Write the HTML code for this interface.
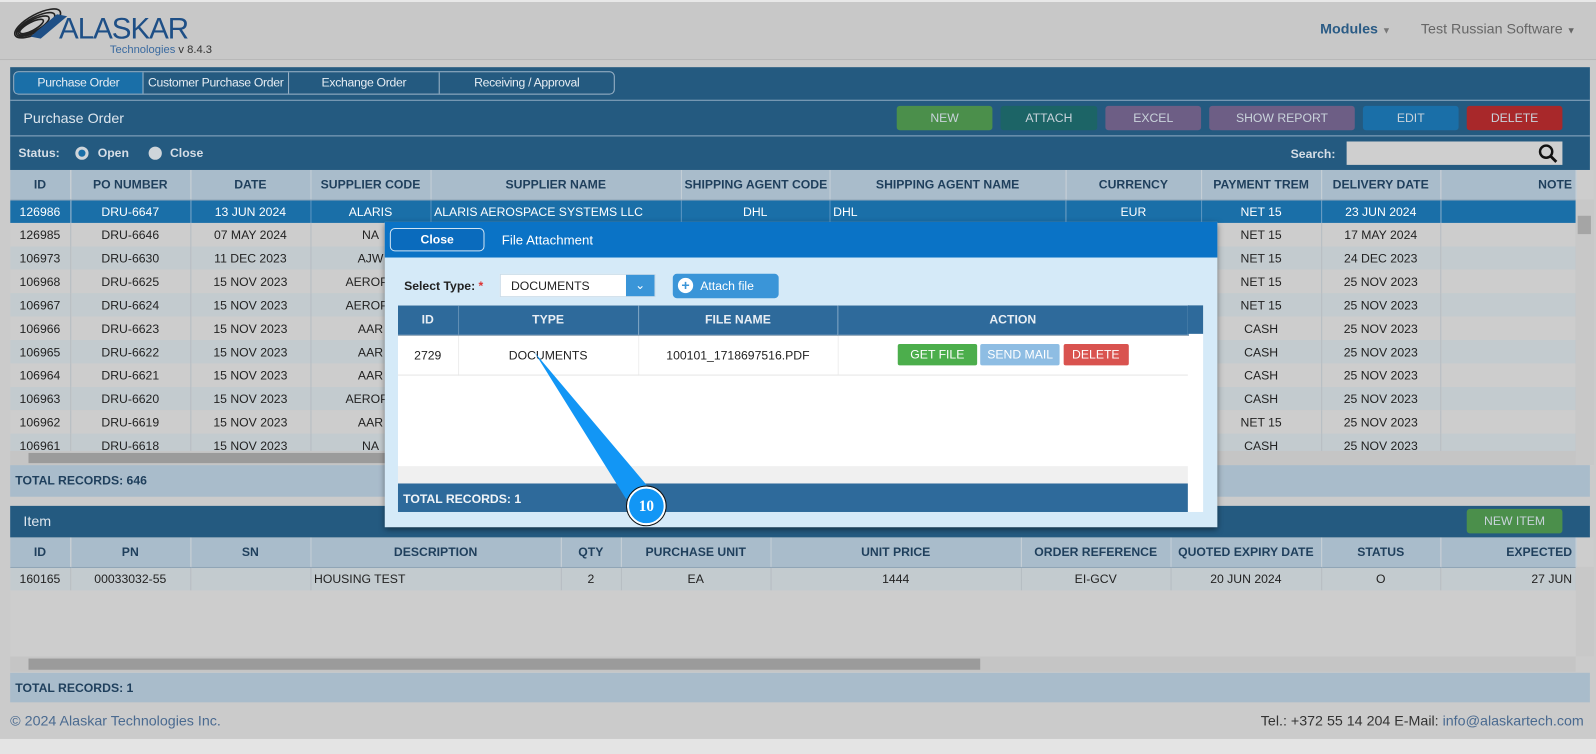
<!DOCTYPE html>
<html><head><meta charset="utf-8"><style>
*{box-sizing:border-box;margin:0;padding:0}
html,body{width:1596px;height:741px;overflow:hidden}
body{background:#cbcbcb;font-family:"Liberation Sans",Arial,sans-serif;font-size:12px;color:#222}
#w{position:absolute;left:0;top:0;width:1568px;height:728px;transform:scale(1.01786);transform-origin:0 0}
.a{position:absolute}
table{border-collapse:collapse;table-layout:fixed}
td,th{white-space:nowrap;overflow:hidden;text-align:center;border-right:1px solid #b5bcc2;padding:0 3px}
th{background:#a9bccb;color:#1f3f5c;font-weight:bold;font-size:12px;height:29px;border-right:1px solid #c3ced7;border-bottom:1px solid #8ea4b6}
.tb td{height:23px}
.tb tr:nth-child(odd) td{background:#cdcdcd}
.tb tr:nth-child(even) td{background:#c3cbcf}
.tb tr.sel td{background:#1a6fa8;color:#fff;border-right-color:#4f8fbf}
.btn{position:absolute;top:104px;height:24px;border-radius:3px;color:#c9d3db;text-align:center;line-height:24px;font-size:12px}
.bar{background:#245a80}
</style></head><body><div id="w">
<div class="a" style="left:0;top:0;width:1568px;height:2px;background:#e8e8e8"></div>
<div class="a" style="left:0;top:2px;width:1568px;height:57px;background:#c8c8c8;border-bottom:1px solid #b8b8b8"></div>
<svg class="a" style="left:10px;top:6px" width="62" height="36" viewBox="0 0 62 36">
<g fill="none" stroke="#222" stroke-width="1.6"><ellipse cx="27" cy="17" rx="25" ry="9" transform="rotate(-28 27 17)"/><ellipse cx="25" cy="18" rx="21" ry="7" transform="rotate(-28 25 18)"/><ellipse cx="23" cy="19" rx="17" ry="5.5" transform="rotate(-28 23 19)"/><ellipse cx="21" cy="20" rx="13" ry="4" transform="rotate(-28 21 20)"/></g>
<path d="M20 30 L46 8 L56 10 L30 32Z" fill="#1e4f86"/></svg>
<div class="a" style="left:58px;top:13px;font-size:29px;color:#1e4f86;letter-spacing:-1px">ALASKAR</div>
<div class="a" style="left:108px;top:43px;font-size:11px;color:#3a6aa0">Technologies <span style="color:#333">v 8.4.3</span></div>
<div class="a" style="left:1297px;top:20px;font-size:14px;font-weight:bold;color:#2a5b85">Modules <span style="font-size:9px;color:#777">▼</span></div>
<div class="a" style="left:1396px;top:20px;font-size:14px;color:#666">Test Russian Software <span style="font-size:9px">▼</span></div>

<div class="a bar" style="left:10px;top:66px;width:1552px;height:101px"></div>
<div class="a" style="left:13px;top:70px;width:591px;height:23px;border:1px solid #9fb6c9;border-radius:5px;overflow:hidden;display:flex;color:#e6edf3;font-size:12px;letter-spacing:-0.3px">
<div style="width:126px;background:#1a6fa8;text-align:center;line-height:21px">Purchase Order</div>
<div style="width:143px;border-left:1px solid #9fb6c9;text-align:center;line-height:21px;white-space:nowrap">Customer Purchase Order</div>
<div style="width:148px;border-left:1px solid #9fb6c9;text-align:center;line-height:21px">Exchange Order</div>
<div style="flex:1;border-left:1px solid #9fb6c9;text-align:center;line-height:21px">Receiving / Approval</div></div>
<div class="a" style="left:10px;top:98px;width:1552px;height:1px;background:#8eaac2"></div>
<div class="a" style="left:23px;top:108px;font-size:14px;color:#dde6ee">Purchase Order</div>
<div class="btn" style="left:881px;width:94px;background:#4b8f4b">NEW</div>
<div class="btn" style="left:983px;width:95px;background:#1c6466">ATTACH</div>
<div class="btn" style="left:1086px;width:94px;background:#6d5e85">EXCEL</div>
<div class="btn" style="left:1188px;width:143px;background:#6d5e85">SHOW REPORT</div>
<div class="btn" style="left:1339px;width:94px;background:#1a6fa8">EDIT</div>
<div class="btn" style="left:1441px;width:94px;background:#a8282a">DELETE</div>
<div class="a" style="left:10px;top:133px;width:1552px;height:1px;background:#8eaac2"></div>
<div class="a" style="left:18px;top:143px;font-weight:bold;color:#d6dee6">Status:</div>
<div class="a" style="left:74px;top:144px;width:13px;height:13px;border-radius:50%;background:#cfd5da;border:3px solid #cfd5da"><div style="width:7px;height:7px;border-radius:50%;background:#1a6fa8;margin:0"></div></div>
<div class="a" style="left:96px;top:143px;font-weight:bold;color:#d6dee6">Open</div>
<div class="a" style="left:146px;top:144px;width:13px;height:13px;border-radius:50%;background:#cfd5da"></div>
<div class="a" style="left:167px;top:143px;font-weight:bold;color:#d6dee6">Close</div>
<div class="a" style="left:1268px;top:144px;font-weight:bold;color:#d6dee6">Search:</div>
<div class="a" style="left:1323px;top:139px;width:212px;height:23px;background:#cfcfcf"></div>
<svg class="a" style="left:1511px;top:141px" width="20" height="20" viewBox="0 0 20 20"><circle cx="8" cy="8" r="6" fill="none" stroke="#111" stroke-width="2.4"/><path d="M12.5 12.5 L18 18" stroke="#111" stroke-width="2.8"/></svg>

<div class="a" style="left:10px;top:167px;width:1556px;height:290px;background:#cdcdcd;overflow:hidden">
<table class="tb" style="width:1538px">
<colgroup><col style="width:59px"><col style="width:118px"><col style="width:118px"><col style="width:118px"><col style="width:246px"><col style="width:146px"><col style="width:232px"><col style="width:133px"><col style="width:118px"><col style="width:117px"><col style="width:133px"></colgroup>
<tr><th>ID</th><th>PO NUMBER</th><th>DATE</th><th>SUPPLIER CODE</th><th>SUPPLIER NAME</th><th>SHIPPING AGENT CODE</th><th>SHIPPING AGENT NAME</th><th>CURRENCY</th><th>PAYMENT TREM</th><th>DELIVERY DATE</th><th style="text-align:right">NOTE</th></tr>
<tr class="sel"><td>126986</td><td>DRU-6647</td><td>13 JUN 2024</td><td>ALARIS</td><td style="text-align:left">ALARIS AEROSPACE SYSTEMS LLC</td><td>DHL</td><td style="text-align:left">DHL</td><td>EUR</td><td>NET 15</td><td>23 JUN 2024</td><td></td></tr>
<tr><td>126985</td><td>DRU-6646</td><td>07 MAY 2024</td><td>NA</td><td></td><td></td><td></td><td></td><td>NET 15</td><td>17 MAY 2024</td><td></td></tr>
<tr><td>106973</td><td>DRU-6630</td><td>11 DEC 2023</td><td>AJW</td><td></td><td></td><td></td><td></td><td>NET 15</td><td>24 DEC 2023</td><td></td></tr>
<tr><td>106968</td><td>DRU-6625</td><td>15 NOV 2023</td><td>AEROPA</td><td></td><td></td><td></td><td></td><td>NET 15</td><td>25 NOV 2023</td><td></td></tr>
<tr><td>106967</td><td>DRU-6624</td><td>15 NOV 2023</td><td>AEROPA</td><td></td><td></td><td></td><td></td><td>NET 15</td><td>25 NOV 2023</td><td></td></tr>
<tr><td>106966</td><td>DRU-6623</td><td>15 NOV 2023</td><td>AAR</td><td></td><td></td><td></td><td></td><td>CASH</td><td>25 NOV 2023</td><td></td></tr>
<tr><td>106965</td><td>DRU-6622</td><td>15 NOV 2023</td><td>AAR</td><td></td><td></td><td></td><td></td><td>CASH</td><td>25 NOV 2023</td><td></td></tr>
<tr><td>106964</td><td>DRU-6621</td><td>15 NOV 2023</td><td>AAR</td><td></td><td></td><td></td><td></td><td>CASH</td><td>25 NOV 2023</td><td></td></tr>
<tr><td>106963</td><td>DRU-6620</td><td>15 NOV 2023</td><td>AEROPA</td><td></td><td></td><td></td><td></td><td>CASH</td><td>25 NOV 2023</td><td></td></tr>
<tr><td>106962</td><td>DRU-6619</td><td>15 NOV 2023</td><td>AAR</td><td></td><td></td><td></td><td></td><td>NET 15</td><td>25 NOV 2023</td><td></td></tr>
<tr><td>106961</td><td>DRU-6618</td><td>15 NOV 2023</td><td>NA</td><td></td><td></td><td></td><td></td><td>CASH</td><td>25 NOV 2023</td><td></td></tr>
</table>
<div class="a" style="left:1538px;top:29px;width:18px;height:261px;background:#c8c8c8"><div style="margin:16px 2px;width:13px;height:18px;background:#a5a5a5"></div></div>
</div>
<div class="a" style="left:10px;top:443px;width:1538px;height:14px;background:#c5c5c5"><div style="margin:2px 0 0 18px;width:1000px;height:10px;background:#9b9b9b"></div></div>
<div class="a" style="left:10px;top:457px;width:1552px;height:31px;background:#a9bccb;font-weight:bold;color:#1f3f5c;padding:8px 5px">TOTAL RECORDS: 646</div>

<div class="a bar" style="left:10px;top:497px;width:1552px;height:31px"></div>
<div class="a" style="left:23px;top:504px;font-size:14px;color:#dde6ee">Item</div>
<div class="a" style="left:1441px;top:500px;width:94px;height:24px;border-radius:3px;background:#4b8f4b;color:#c9d3db;text-align:center;line-height:24px">NEW ITEM</div>
<div class="a" style="left:10px;top:528px;width:1556px;height:117px;background:#cdcdcd;overflow:hidden">
<table class="tb" style="width:1538px">
<colgroup><col style="width:59px"><col style="width:118px"><col style="width:118px"><col style="width:246px"><col style="width:59px"><col style="width:147px"><col style="width:246px"><col style="width:147px"><col style="width:148px"><col style="width:117px"><col style="width:133px"></colgroup>
<tr><th>ID</th><th>PN</th><th>SN</th><th>DESCRIPTION</th><th>QTY</th><th>PURCHASE UNIT</th><th>UNIT PRICE</th><th>ORDER REFERENCE</th><th>QUOTED EXPIRY DATE</th><th>STATUS</th><th style="text-align:right">EXPECTED</th></tr>
<tr><td>160165</td><td>00033032-55</td><td></td><td style="text-align:left">HOUSING TEST</td><td>2</td><td>EA</td><td>1444</td><td>EI-GCV</td><td>20 JUN 2024</td><td>O</td><td style="text-align:right">27 JUN</td></tr>
</table>
<div class="a" style="left:1538px;top:29px;width:18px;height:88px;background:#c8c8c8"></div>
</div>
<div class="a" style="left:10px;top:645px;width:1538px;height:15px;background:#c5c5c5"><div style="margin:2px 0 0 18px;width:935px;height:11px;background:#9b9b9b"></div></div>
<div class="a" style="left:10px;top:661px;width:1552px;height:29px;background:#a9bccb;font-weight:bold;color:#1f3f5c;padding:8px 5px">TOTAL RECORDS: 1</div>

<div class="a" style="left:10px;top:700px;font-size:14px;color:#4a6a90">© 2024 Alaskar Technologies Inc.</div>
<div class="a" style="right:12px;top:700px;font-size:14px;color:#333">Tel.: +372 55 14 204 E-Mail: <span style="color:#4a6a90">info@alaskartech.com</span></div>
<div class="a" style="left:0;top:726px;width:1568px;height:15px;background:#e4e4e4"></div>

<div class="a" style="left:378px;top:218px;width:818px;height:300px;background:#d5eaf8;box-shadow:0 2px 6px rgba(0,0,0,.5)">
<div style="height:35px;background:#0a73c6;position:relative">
<div class="a" style="left:5px;top:6px;width:93px;height:23px;border:1px solid #cfe4f4;border-radius:5px;background:#0a6bbd;color:#fff;text-align:center;line-height:20px;font-weight:bold">Close</div>
<div class="a" style="left:115px;top:10px;font-size:13px;color:#fff">File Attachment</div></div>
<div class="a" style="left:19px;top:56px;font-weight:bold;color:#222">Select Type: <span style="color:#d33">*</span></div>
<div class="a" style="left:113px;top:51px;width:153px;height:23px;background:#fff;border:1px solid #c9dbe8"><span style="position:absolute;left:10px;top:4px">DOCUMENTS</span><div style="position:absolute;right:0;top:0;width:28px;height:21px;background:#3a95d8;color:#fff;text-align:center;line-height:20px">⌄</div></div>
<div class="a" style="left:283px;top:51px;width:104px;height:24px;background:#3a95d8;border-radius:4px;color:#fff"><span style="position:absolute;left:5px;top:4px;width:15px;height:15px;border-radius:50%;background:#fff;color:#3a95d8;font-weight:bold;text-align:center;line-height:15px;font-size:14px">+</span><span style="position:absolute;left:27px;top:5px">Attach file</span></div>
<div class="a" style="left:13px;top:82px;width:791px;height:203px;background:#fff">
<table style="width:776px"><colgroup><col style="width:59px"><col style="width:177px"><col style="width:196px"><col style="width:344px"></colgroup>
<tr><th style="background:#2e6a9b;color:#e8eef4;height:28px;border-right-color:#5a8ab2">ID</th><th style="background:#2e6a9b;color:#e8eef4;border-right-color:#5a8ab2">TYPE</th><th style="background:#2e6a9b;color:#e8eef4;border-right-color:#5a8ab2">FILE NAME</th><th style="background:#2e6a9b;color:#e8eef4;border-right-color:#5a8ab2">ACTION</th></tr>
<tr><td style="height:39px;border-right:1px solid #eee;border-bottom:1px solid #e5e5e5">2729</td><td style="border-right:1px solid #eee;border-bottom:1px solid #e5e5e5">DOCUMENTS</td><td style="border-right:1px solid #eee;border-bottom:1px solid #e5e5e5">100101_1718697516.PDF</td><td style="border-bottom:1px solid #e5e5e5;border-right:none">
<span style="display:inline-block;width:78px;height:21px;line-height:21px;background:#4cae4c;color:#fff;border-radius:2px">GET FILE</span>
<span style="display:inline-block;width:78px;height:21px;line-height:21px;background:#8ebde3;color:#fff;border-radius:2px">SEND MAIL</span>
<span style="display:inline-block;width:64px;height:21px;line-height:21px;background:#d9534f;color:#fff;border-radius:2px">DELETE</span></td></tr></table>
<div class="a" style="left:776px;top:0;width:15px;height:28px;background:#2e6a9b"></div>
<div class="a" style="left:0;top:158px;width:776px;height:17px;background:#f0f0f0"></div>
<div class="a" style="left:0;top:175px;width:776px;height:28px;background:#2e6a9b;color:#f0f4f8;font-weight:bold;padding:8px 5px">TOTAL RECORDS: 1</div>
</div></div>

<svg class="a" style="left:515px;top:340px" width="150" height="180" viewBox="0 0 150 180">
<path d="M10 6 L100 150 L130 148 Z" fill="#1296f5"/>
<circle cx="120" cy="157" r="18" fill="#1296f5" stroke="#fff" stroke-width="2"/>
<circle cx="120" cy="157" r="19.5" fill="none" stroke="#111" stroke-width="1"/>
<text x="120" y="162" text-anchor="middle" font-family="Liberation Serif" font-weight="bold" font-size="15" fill="#fff">10</text></svg>
</div></body></html>
